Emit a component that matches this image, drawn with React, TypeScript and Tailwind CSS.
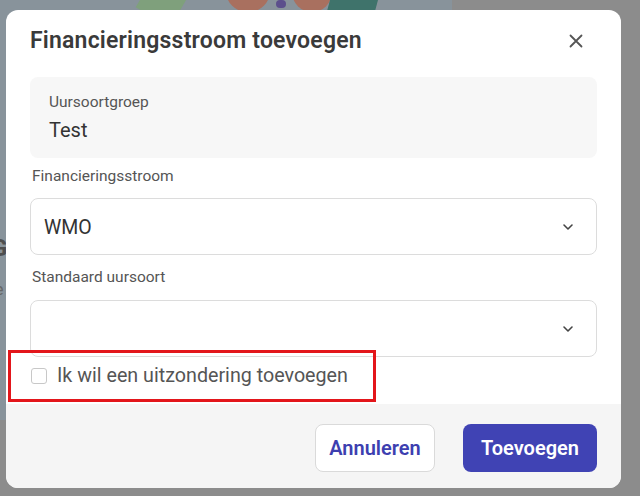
import React from "react";

const font = { fontFamily: '"Roboto", "Liberation Sans", sans-serif' };

function Chevron() {
  return (
    <svg width="16" height="16" viewBox="0 0 24 24" fill="none" stroke="#444" strokeWidth="2.4" strokeLinecap="round" strokeLinejoin="round">
      <path d="M6 9l6 6 6-6" />
    </svg>
  );
}

export default function App() {
  return (
    <div className="relative w-[640px] h-[496px] overflow-hidden bg-[#8c8c8c]" style={font}>
      {/* backdrop content */}
      <div className="absolute left-0 top-0 w-[452px] h-[420px] bg-[#88939b]" />
      <div className="absolute left-[143px] top-[-20px] w-[40px] h-[40px] bg-[#7fa07c] rotate-[30deg]" />
      <div className="absolute left-[226px] top-[-30px] w-[44px] h-[42px] rounded-full bg-[#a9705f]" />
      <div className="absolute left-[292px] top-[-30px] w-[40px] h-[42px] rounded-full bg-[#a9705f]" />
      <div className="absolute left-[276px] top-[0px] w-[10px] h-[8px] rounded-full bg-[#5c4f8c]" />
      <div className="absolute left-[330px] top-[-20px] w-[48px] h-[40px] bg-[#3f736b] skew-x-[-15deg]" />
      <div className="absolute left-[-9px] top-[234px] text-[24px] leading-[28px] font-bold text-[#4e4e4e]">G</div>
      <div className="absolute left-[-5px] top-[280px] text-[16px] leading-[20px] text-[#666]">e</div>

      {/* modal */}
      <div className="absolute left-[6px] top-[10px] w-[615px] h-[478px] bg-white rounded-[12px] overflow-hidden flex flex-col">
        <div className="flex-1 px-6 pt-[15px]">
          <div className="flex items-center justify-between">
            <h2 className="text-[23px] leading-[32px] font-semibold text-[#3a3a3a] tracking-[0.2px]">Financieringsstroom toevoegen</h2>
            <svg width="14" height="14" viewBox="0 0 14 14" className="mr-[14px]" stroke="#555" strokeWidth="1.8" strokeLinecap="round">
              <path d="M1.5 1.5l11 11M12.5 1.5l-11 11" />
            </svg>
          </div>
          <div className="mt-[20px] h-[81px] rounded-[8px] bg-[#f7f7f7] px-[19px] pt-[15px]">
            <div className="text-[15.5px] leading-[20px] text-[#555]">Uursoortgroep</div>
            <div className="mt-[6px] text-[20px] leading-[24px] text-[#333]">Test</div>
          </div>
          <div className="mt-[8px] text-[15.5px] leading-[20px] text-[#555] pl-[2px]">Financieringsstroom</div>
          <div className="mt-[12px] h-[57px] rounded-[8px] border border-[#dcdcdc] flex items-center justify-between pl-[13px] pr-[20px]">
            <span className="text-[19.5px] leading-[24px] text-[#333] pt-[2px]">WMO</span>
            <Chevron />
          </div>
          <div className="mt-[12px] text-[15.5px] leading-[20px] text-[#555] pl-[2px]">Standaard uursoort</div>
          <div className="mt-[13px] h-[57px] rounded-[8px] border border-[#dcdcdc] flex items-center justify-end pr-[20px]">
            <Chevron />
          </div>
          <div className="relative mt-[4px] h-[30px] flex items-center gap-[10px] pl-[1px]">
            <div className="w-[16px] h-[16px] rounded-[3px] border-[1.5px] border-[#c8c8c8] bg-white" />
            <span className="text-[19.7px] leading-[24px] text-[#555]">Ik wil een uitzondering toevoegen</span>
            <div className="absolute left-[-22px] top-[-11px] w-[368px] h-[52px] border-[3.5px] border-[#e3161b]" />
          </div>
        </div>
        <div className="h-[84px] bg-[#f5f5f5] flex items-center justify-end gap-[28px] px-6 pt-[4px]">
          <button className="h-[48px] w-[120px] rounded-[8px] border border-[#dadada] bg-white text-[20px] font-semibold text-[#3d3fb0]">Annuleren</button>
          <button className="h-[48px] w-[134px] rounded-[8px] bg-[#4043b4] text-[20px] font-semibold text-white">Toevoegen</button>
        </div>
      </div>
    </div>
  );
}
